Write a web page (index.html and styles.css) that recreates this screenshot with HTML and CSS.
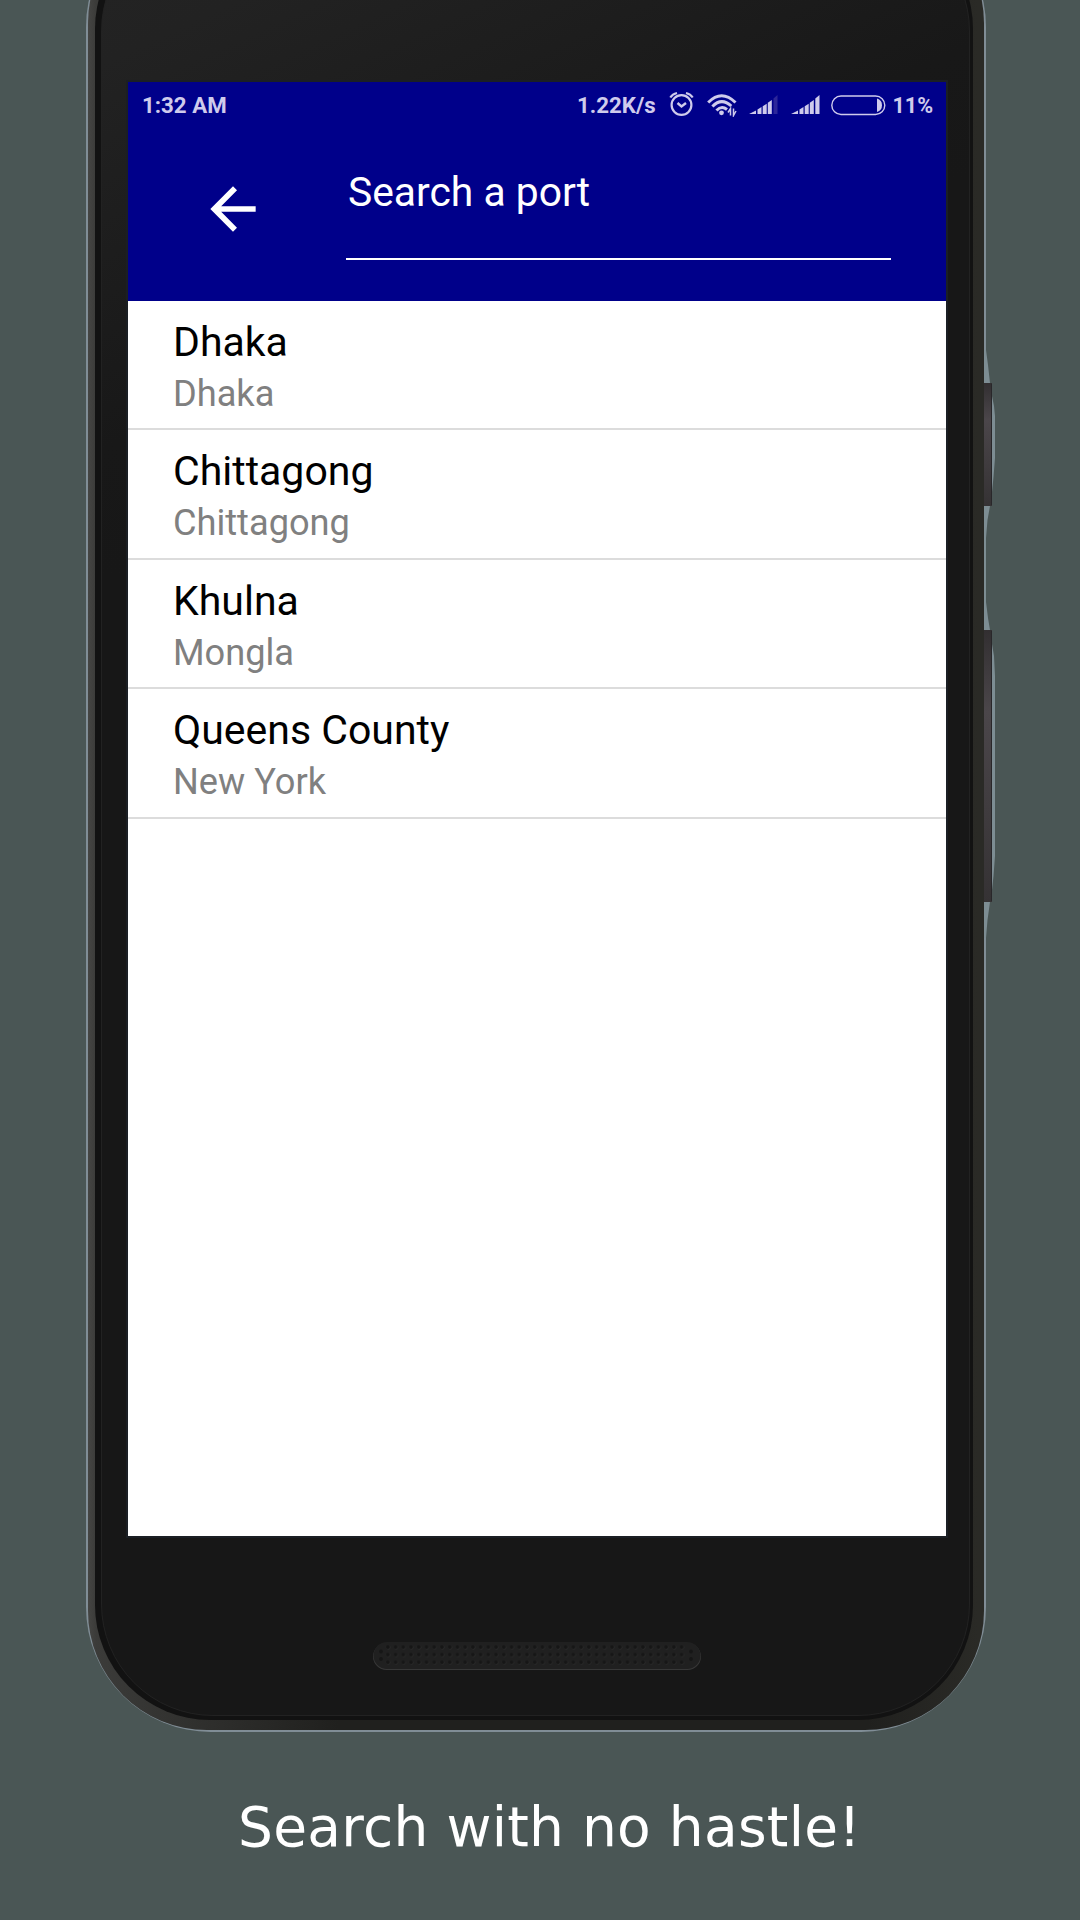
FILE: index.html
```html
<!DOCTYPE html>
<html lang="en">
<head>
<meta charset="utf-8">
<title>Search a port</title>
<link rel="stylesheet" href="styles.css">
</head>
<body>
<div class="phone">
  <svg class="side-keys" width="12" height="600" viewBox="0 0 12 600">
    <defs>
      <linearGradient id="key" x1="0" y1="0" x2="0" y2="1">
        <stop offset="0" stop-color="#322f31"/><stop offset=".3" stop-color="#4b464a"/><stop offset="1" stop-color="#353234"/>
      </linearGradient>
    </defs>
    <path fill="#7d8d93" d="M0 10h2L4 25 6 43H8V56L10 66 11 76V118L9.500 137 8 152V166H6L3.500 180 2 198V262L4 278 6 290H8V304L10 316 11 336V516L9.500 536 8 550V562H6L3.500 580 2 598H0z"/>
    <rect y="43" width="8" height="123" fill="url(#key)"/>
    <rect y="290" width="8" height="272" fill="url(#key)"/>
    <path d="M7.500 44V165M7.500 291V561" stroke="#29272a"/>
  </svg>
  <div class="frame">
    <div class="bezel">
      <div class="face">
        <main class="screen">
          <header class="header">
            <div class="status">
              <span class="clock">1:32 AM</span>
              <span class="rate">1.22K/s</span>
              <svg class="alarm" width="26" height="26" viewBox="0 0 26 26" fill="none" stroke="#cfcbec" stroke-width="2.200">
                <circle cx="12.500" cy="14" r="9.900"/><path d="M8.500 12l4 3.500L17 12" stroke-width="2.400"/><path d="M1.300 6.500Q3.500 3 8 2M23.700 6.500Q21.500 3 17 2"/>
              </svg>
              <svg class="wifi" width="30" height="24" viewBox="0 0 30 24" fill="none" stroke="#cfcbec" stroke-width="3">
                <path d="M1.200 9.500Q14.500-4 28.500 9.500M5.400 13.500Q14.500 4 24.300 13M9.500 17.500Q14.500 12 20 16.500"/><circle cx="14.500" cy="19.800" r="2.400" fill="#cfcbec" stroke="none"/>
                <path d="M23.500 22.500v-7l-2.500 4M26.500 15.500v7l2.500-4.500" stroke-width="1.500"/>
              </svg>
              <svg class="signal" width="29" height="20" viewBox="0 0 29 20" fill="#cfcbec">
                <path d="M0 19L7 15.500V19zM8.500 14.500l4-2.500v7h-4zM13.700 11.200l4-2.500V19h-4zM18.800 7.700l4-2.700v14h-4z"/><path d="M24.500 3.500L28.500 0V19h-4z" fill="#2c2699"/>
              </svg>
              <svg class="signal second" width="29" height="20" viewBox="0 0 29 20" fill="#cfcbec">
                <path d="M0 19L7 15.500V19zM8.500 14.500l4-2.500v7h-4zM13.700 11.200l4-2.500V19h-4zM18.800 7.700l4-2.700v14h-4zM24.300 3.500L28.500 0V19h-4.200z"/>
              </svg>
              <svg class="battery" width="55" height="21" viewBox="0 0 55 21">
                <rect x=".800" y="1" width="53" height="18.500" rx="9.200" fill="none" stroke="#cfcbec" stroke-width="1.400"/><path d="M46 3.500Q51 5 51 10.200T46 17z" fill="#cfcbec"/>
              </svg>
              <span class="percent">11%</span>
            </div>
            <div class="toolbar">
              <svg class="back" width="68" height="68" viewBox="0 0 24 24" fill="#fff"><path d="M20 11H7.830l5.590-5.590L12 4l-8 8 8 8 1.410-1.410L7.830 13H20z"/></svg>
              <div class="field">Search a port</div>
            </div>
          </header>
          <ul class="ports">
            <li><b>Dhaka</b><span>Dhaka</span></li>
            <li><b>Chittagong</b><span>Chittagong</span></li>
            <li><b>Khulna</b><span>Mongla</span></li>
            <li><b>Queens County</b><span>New York</span></li>
          </ul>
        </main>
        <svg class="speaker" width="330" height="30" viewBox="0 0 330 30">
          <defs>
            <pattern id="holes" x="12.100" y="2.200" width="7.730" height="7.600" patternUnits="userSpaceOnUse">
              <circle cx="4.300" cy="4.300" r="2" fill="#2b2b2b"/><circle cx="3.800" cy="3.800" r="1.900" fill="#161616"/>
            </pattern>
          </defs>
          <rect x="1" y="2" width="328" height="27" rx="13.500" fill="#383838"/>
          <rect x="1.500" y="1" width="327" height="27" rx="13.500" fill="#202020"/>
          <rect x="12.100" y="2.200" width="301.400" height="22.800" fill="url(#holes)"/>
          <g fill="#161616"><circle cx="9" cy="10.500" r="1.900"/><circle cx="9" cy="18" r="1.900"/><circle cx="319" cy="10.500" r="1.900"/><circle cx="319" cy="18" r="1.900"/></g>
        </svg>
      </div>
    </div>
  </div>
</div>
<p class="caption">Search with no hastle!</p>
</body>
</html>
```
FILE: styles.css
```css
* { box-sizing: border-box; }
html, body { height: 1920px; overflow: hidden; }
body {
  margin: 0;
  display: flex;
  flex-direction: column;
  background: #4a5655;
  font-family: Roboto, sans-serif;
}
.phone {
  position: relative;
  flex: none;
  width: 900px;
  height: 1830px;
  margin: -98px 0 0 86px;
  padding: 2px;
  border-radius: 125px;
  background: #808d96;
}
.side-keys {
  position: absolute;
  left: 898px;
  top: 438px;
}
.frame {
  height: 100%;
  padding: 10px 11px 10px 7px;
  border-radius: 119px;
  background: linear-gradient(90deg, #454543 0, #3b3b39 8px, #20201e 250px, #20201e 780px, #2a2a26 890px, #2a2a26);
}
.bezel {
  height: 100%;
  padding: 5px 3px 4px 6px;
  border-radius: 115px;
  background: #121212;
}
.face {
  height: 100%;
  padding: 160px 0 0 24px;
  border: 1px solid #222;
  border-radius: 112px;
  background: linear-gradient(155deg, #242424 0, #222 130px, #181818 480px, #171717 600px);
}
.screen {
  width: 822px;
  height: 1458px;
  border: 2px solid #1b1f24;
  background: #fff;
}
.header {
  display: flex;
  flex-direction: column;
  height: 219px;
  background: #00008a;
}
.status {
  display: flex;
  align-items: center;
  height: 46px;
  padding-left: 14px;
  color: #cfcbec;
  font-size: 22.300px;
  font-weight: 700;
  white-space: nowrap;
}
.clock { flex: none; width: 435px; }
.rate { flex: none; width: 92px; }
.alarm { margin-top: -2px; }
.wifi { margin-left: 12px; }
.signal { margin-left: 12px; }
.second { margin-left: 12.500px; }
.battery { margin-left: 11px; }
.percent { margin-left: 7px; font-size: 21.500px; }
.toolbar { display: flex; align-items: flex-start; }
.back { flex: none; margin: 47px 0 0 71px; }
.field {
  width: 545px;
  height: 105px;
  margin: 27px 0 0 79px;
  padding: 13px 0 0 2px;
  border-bottom: 2px solid #fff;
  color: #fff;
  font-size: 40.800px;
  line-height: 48px;
}
.ports { margin: 0; padding: 0; list-style: none; }
.ports li {
  display: flex;
  flex-direction: column;
  height: 129.400px;
  padding: 17px 0 0 45px;
  border-bottom: 2px solid #dcdcdc;
}
.ports b { color: #000; font-size: 41px; font-weight: 400; line-height: 48px; }
.ports span { color: #808080; font-size: 36.200px; line-height: 42px; margin-top: 7px; }
.speaker { display: block; margin: 103px 0 0 246px; }
.caption {
  margin: 62px 0 0 238px;
  color: #fff;
  font-family: "DejaVu Sans", sans-serif;
  font-size: 55px;
  letter-spacing: .28px;
  line-height: 66px;
  white-space: nowrap;
}
```
